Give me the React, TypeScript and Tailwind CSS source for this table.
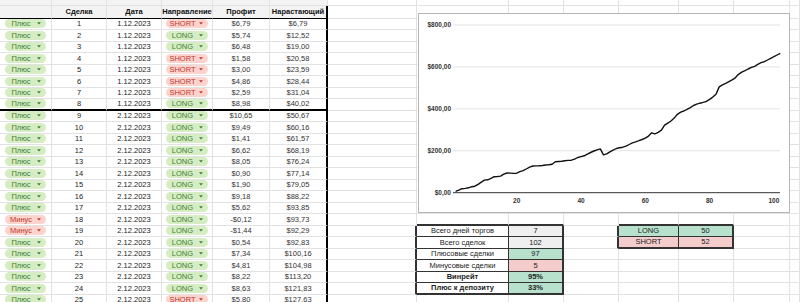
import React from 'react';

type Result = 'Плюс' | 'Минус';
type Side = 'LONG' | 'SHORT';

interface Trade {
  res: Result;
  n: number;
  date: string;
  side: Side;
  profit: string;
  total: string;
}

const D1 = '1.12.2023';
const D2 = '2.12.2023';

const TRADES: Trade[] = [
  { res: 'Плюс', n: 1, date: D1, side: 'SHORT', profit: '$6,79', total: '$6,79' },
  { res: 'Плюс', n: 2, date: D1, side: 'LONG', profit: '$5,74', total: '$12,52' },
  { res: 'Плюс', n: 3, date: D1, side: 'LONG', profit: '$6,48', total: '$19,00' },
  { res: 'Плюс', n: 4, date: D1, side: 'SHORT', profit: '$1,58', total: '$20,58' },
  { res: 'Плюс', n: 5, date: D1, side: 'SHORT', profit: '$3,00', total: '$23,59' },
  { res: 'Плюс', n: 6, date: D1, side: 'SHORT', profit: '$4,86', total: '$28,44' },
  { res: 'Плюс', n: 7, date: D1, side: 'SHORT', profit: '$2,59', total: '$31,04' },
  { res: 'Плюс', n: 8, date: D1, side: 'LONG', profit: '$8,98', total: '$40,02' },
  { res: 'Плюс', n: 9, date: D2, side: 'LONG', profit: '$10,65', total: '$50,67' },
  { res: 'Плюс', n: 10, date: D2, side: 'LONG', profit: '$9,49', total: '$60,16' },
  { res: 'Плюс', n: 11, date: D2, side: 'LONG', profit: '$1,41', total: '$61,57' },
  { res: 'Плюс', n: 12, date: D2, side: 'LONG', profit: '$6,62', total: '$68,19' },
  { res: 'Плюс', n: 13, date: D2, side: 'LONG', profit: '$8,05', total: '$76,24' },
  { res: 'Плюс', n: 14, date: D2, side: 'LONG', profit: '$0,90', total: '$77,14' },
  { res: 'Плюс', n: 15, date: D2, side: 'LONG', profit: '$1,90', total: '$79,05' },
  { res: 'Плюс', n: 16, date: D2, side: 'LONG', profit: '$9,18', total: '$88,22' },
  { res: 'Плюс', n: 17, date: D2, side: 'LONG', profit: '$5,62', total: '$93,85' },
  { res: 'Минус', n: 18, date: D2, side: 'LONG', profit: '-$0,12', total: '$93,73' },
  { res: 'Минус', n: 19, date: D2, side: 'LONG', profit: '-$1,44', total: '$92,29' },
  { res: 'Плюс', n: 20, date: D2, side: 'LONG', profit: '$0,54', total: '$92,83' },
  { res: 'Плюс', n: 21, date: D2, side: 'LONG', profit: '$7,34', total: '$100,16' },
  { res: 'Плюс', n: 22, date: D2, side: 'LONG', profit: '$4,81', total: '$104,98' },
  { res: 'Плюс', n: 23, date: D2, side: 'LONG', profit: '$8,22', total: '$113,20' },
  { res: 'Плюс', n: 24, date: D2, side: 'LONG', profit: '$8,63', total: '$121,83' },
  { res: 'Плюс', n: 25, date: D2, side: 'SHORT', profit: '$5,80', total: '$127,63' },
];

const STATS: { label: string; value: string; fill: string; bold: boolean }[] = [
  { label: 'Всего дней торгов', value: '7', fill: 'bg-[#efefef]', bold: false },
  { label: 'Всего сделок', value: '102', fill: 'bg-[#efefef]', bold: false },
  { label: 'Плюсовые сделки', value: '97', fill: 'bg-[#b7e1cd]', bold: false },
  { label: 'Минусовые сделки', value: '5', fill: 'bg-[#f4cccc]', bold: false },
  { label: 'Винрейт', value: '95%', fill: 'bg-[#b7e1cd]', bold: true },
  { label: 'Плюс к депозиту', value: '33%', fill: 'bg-[#b7e1cd]', bold: true },
];

const SIDES: { label: string; value: string; fill: string }[] = [
  { label: 'LONG', value: '50', fill: 'bg-[#b7e1cd]' },
  { label: 'SHORT', value: '52', fill: 'bg-[#f4cccc]' },
];

// cumulative balance, trades 1..102
const EQUITY = [
  6.79, 12.52, 19, 20.58, 23.59, 28.44, 31.04, 40.02, 50.67, 60.16, 61.57, 68.19, 76.24, 77.14, 79.05,
  88.22, 93.85, 93.73, 92.29, 92.83, 100.16, 104.98, 113.2, 121.83, 127.6, 128, 128.5, 130, 132, 133,
  136, 148, 149, 150, 152, 154, 155, 160, 168, 172, 176, 184, 192, 199, 204, 209, 181, 185, 195, 203,
  211, 214, 217, 222, 230, 238, 243, 248, 254, 260, 270, 286, 281, 288, 298, 322, 332, 342, 356, 374,
  384, 390, 398, 406, 416, 422, 427, 431, 436, 445, 456, 470, 505, 515, 522, 530, 538, 548, 565, 575,
  582, 590, 598, 603, 612, 620, 625, 633, 641, 649, 657, 665,
];

const ROWS = 27; // partial top row, header, 25 trade rows
const COLS = 14;

function rightBorder(r: number, c: number) {
  if (c === 5 && r >= 1) return 'border-r-2 border-r-black';
  if (r >= 20 && r <= 25) {
    if (c === 6 || c === 8) return 'border-r-2 border-r-[#333]';
    if (c === 7) return 'border-r border-r-[#333]';
  }
  if (r >= 20 && r <= 21) {
    if (c === 9 || c === 11) return 'border-r-2 border-r-[#333]';
    if (c === 10) return 'border-r border-r-[#333]';
  }
  return 'border-r border-r-[#e2e2e2]';
}

function bottomBorder(r: number, c: number) {
  if (r === 1 && c <= 5) return 'border-b border-b-black';
  if (r === 9 && c <= 5) return 'border-b-2 border-b-black';
  if (c === 7 || c === 8) {
    if (r === 19 || r === 25) return 'border-b-2 border-b-[#333]';
    if (r >= 20 && r <= 24) return 'border-b border-b-[#333]';
  }
  if (c === 10 || c === 11) {
    if (r === 19 || r === 21) return 'border-b-2 border-b-[#333]';
    if (r === 20) return 'border-b border-b-[#333]';
  }
  return 'border-b border-b-[#e2e2e2]';
}

function Caret() {
  return (
    <svg width="4" height="3" viewBox="0 0 4 3" className="mr-[5px] shrink-0">
      <path d="M0 0.3h4L2 2.6z" fill="currentColor" />
    </svg>
  );
}

function Chip({ label, good }: { label: string; good: boolean }) {
  return (
    <div
      className={`flex h-[9px] w-full items-center rounded-full ${
        good ? 'bg-[#d6edc4] text-[#3f7f35]' : 'bg-[#fdd3ce] text-[#c0392b]'
      }`}
    >
      <span className="flex-1 text-center">{label}</span>
      <Caret />
    </div>
  );
}

function cellContent(r: number, c: number): { node: React.ReactNode; extra: string } {
  if (r === 1) {
    const heads = ['', 'Сделка', 'Дата', 'Направление', 'Профит', 'Нарастающий'];
    if (c <= 5) return { node: heads[c], extra: 'bg-[#f3f3f3] font-bold text-[#111]' };
  }
  if (r === 0 && c <= 5) return { node: null, extra: 'bg-[#f3f3f3]' };

  if (r >= 2) {
    const t = TRADES[r - 2];
    if (c === 0) return { node: <Chip label={t.res} good={t.res === 'Плюс'} />, extra: 'px-[5px]' };
    if (c === 1) return { node: t.n, extra: '' };
    if (c === 2) return { node: t.date, extra: '' };
    if (c === 3) return { node: <Chip label={t.side} good={t.side === 'LONG'} />, extra: 'px-[4px]' };
    if (c === 4) return { node: t.profit, extra: 'text-[#333]' };
    if (c === 5) return { node: t.total, extra: 'text-[#333]' };
  }

  if (r >= 20 && r <= 25) {
    const s = STATS[r - 20];
    if (c === 7) return { node: s.label, extra: `bg-white ${s.bold ? 'font-bold' : ''}` };
    if (c === 8) return { node: s.value, extra: `${s.fill} ${s.bold ? 'font-bold' : ''}` };
  }

  if (r >= 20 && r <= 21) {
    const s = SIDES[r - 20];
    if (c === 10) return { node: s.label, extra: s.fill };
    if (c === 11) return { node: s.value, extra: s.fill };
  }

  return { node: null, extra: '' };
}

function EquityChart() {
  const x0 = 452.4;
  const dx = 3.215;
  const y0 = 192.7;
  const k = 0.2096;
  const points = EQUITY.map((v, i) => `${(x0 + (i + 1) * dx).toFixed(1)},${(y0 - v * k).toFixed(1)}`).join(' ');
  const yTicks = [0, 200, 400, 600, 800];
  const xTicks = [20, 40, 60, 80, 100];

  return (
    <div className="absolute left-[418px] top-[13px] h-[200px] w-[372px] border border-[#b5b5b5] bg-white">
      <svg width="370" height="198" viewBox="419 14 370 198" className="block">
        {yTicks.map((v) => (
          <g key={v}>
            <line
              x1="453"
              x2="780"
              y1={y0 - v * k}
              y2={y0 - v * k}
              stroke={v === 0 ? '#333' : '#e3e3e3'}
              strokeWidth="1"
            />
            <text
              x="451"
              y={y0 - v * k + 2.3}
              textAnchor="end"
              fontFamily="'Liberation Sans', Arial, sans-serif"
              fontSize="6.5"
              fontWeight="bold"
              fill="#333"
            >
              {`$${v},00`}
            </text>
          </g>
        ))}
        {xTicks.map((t) => (
          <text
            key={t}
            x={x0 + t * dx}
            y="202.5"
            textAnchor="middle"
            fontFamily="'Liberation Sans', Arial, sans-serif"
            fontSize="6.5"
            fontWeight="bold"
            fill="#333"
          >
            {t}
          </text>
        ))}
        <polyline points={points} fill="none" stroke="#111" strokeWidth="1.4" strokeLinejoin="round" />
      </svg>
    </div>
  );
}

export default function App() {
  const cells: React.ReactNode[] = [];
  for (let r = 0; r < ROWS; r++) {
    for (let c = 0; c < COLS; c++) {
      const { node, extra } = cellContent(r, c);
      cells.push(
        <div
          key={`${r}-${c}`}
          className={`flex items-center justify-center overflow-hidden whitespace-nowrap ${rightBorder(r, c)} ${bottomBorder(r, c)} ${extra}`}
        >
          {node}
        </div>
      );
    }
  }

  return (
    <div className="relative h-[302px] w-[800px] overflow-hidden bg-white font-['Liberation_Sans',Arial,sans-serif] text-[7.5px] leading-none text-[#222]">
      <div className="grid grid-cols-[52px_55px_55px_51px_57px_58px_89px_92px_55px_55px_60px_55px_56px_10px] grid-rows-[6px_12.5px_repeat(25,11.5px)]">
        {cells}
      </div>
      <EquityChart />
    </div>
  );
}
